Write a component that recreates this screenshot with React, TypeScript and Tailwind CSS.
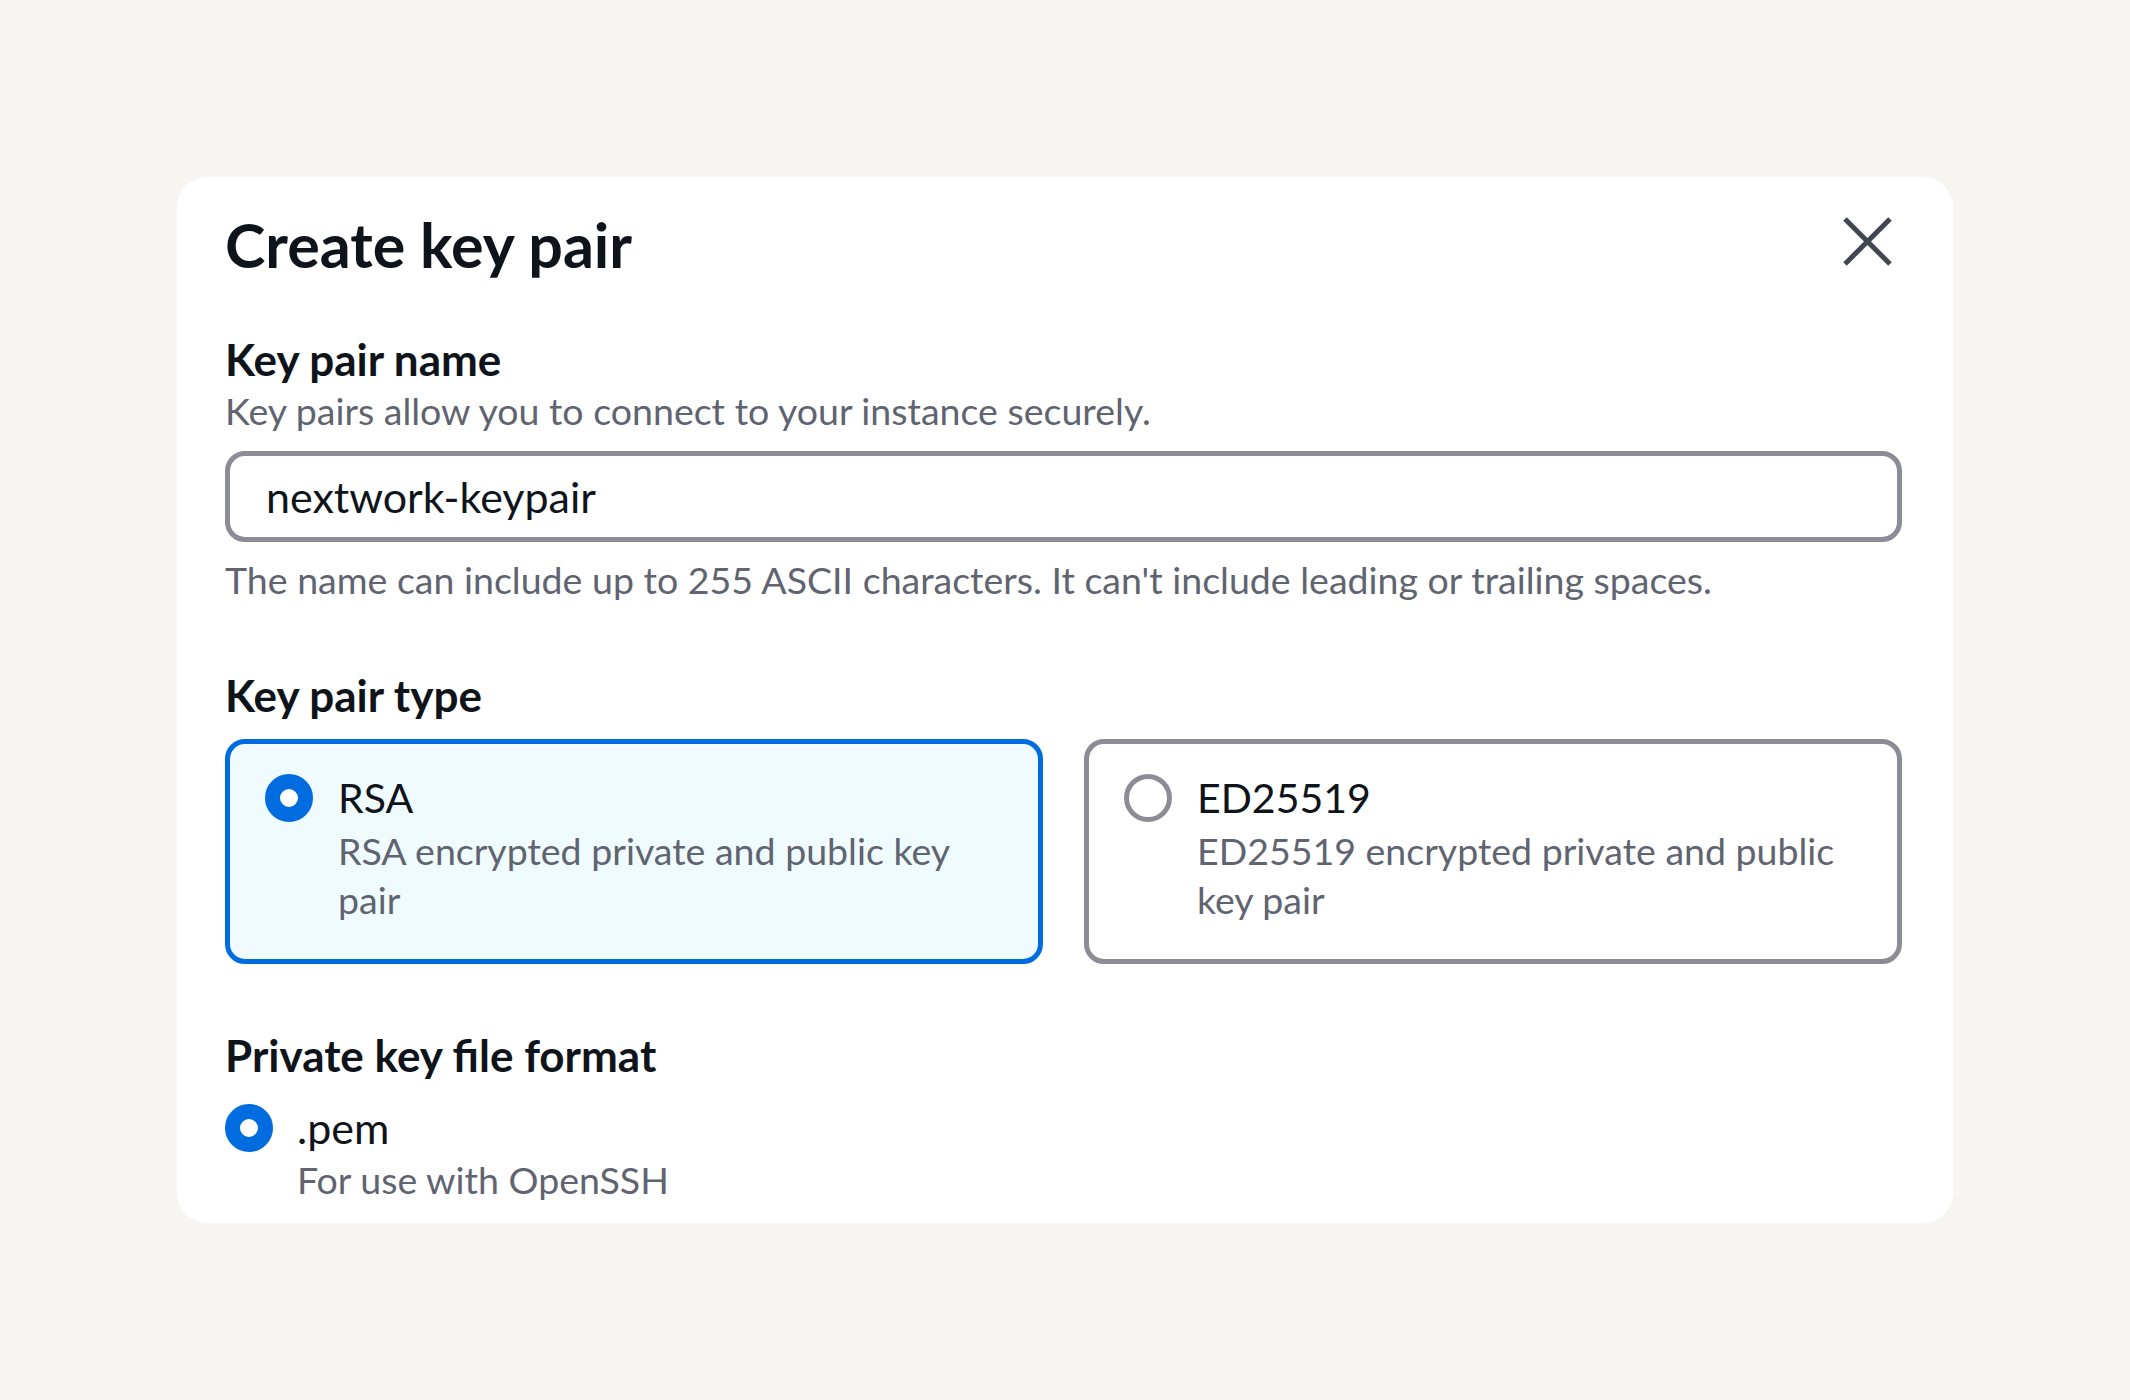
import React from "react";

const font = { fontFamily: "Lato, 'Open Sans', sans-serif" };

function Radio({ checked }: { checked: boolean }) {
  return checked ? (
    <span className="block w-[48px] h-[48px] shrink-0 rounded-full border-[15px] border-[#006ce0] bg-white" />
  ) : (
    <span className="block w-[48px] h-[48px] shrink-0 rounded-full border-[5px] border-[#8c8c94] bg-white" />
  );
}

function Tile({
  checked,
  title,
  desc,
}: {
  checked: boolean;
  title: string;
  desc: string;
}) {
  return (
    <div
      className={
        checked
          ? "flex-1 h-[225px] rounded-[20px] border-[5px] border-[#006ce0] bg-[#f0fbff] pl-[35px] pr-[40px] pt-[30px]"
          : "flex-1 h-[225px] rounded-[20px] border-[5px] border-[#8c8c94] bg-white pl-[35px] pr-[40px] pt-[30px]"
      }
    >
      <div className="flex gap-[25px]">
        <div>
          <Radio checked={checked} />
        </div>
        <div className="flex flex-col">
          <div className="text-[41px] leading-[48px] text-[#0f141a]">{title}</div>
          <div className="mt-[4px] text-[37.5px] leading-[49px] text-[#5f6470]">{desc}</div>
        </div>
      </div>
    </div>
  );
}

export default function App() {
  return (
    <div className="min-h-[1400px] w-full bg-[#f7f5f1] pt-[177px] px-[177px]" style={font}>
      <div className="bg-white rounded-[30px] pl-[48px] pr-[51px] pt-[36px] pb-[19px]">
        <div className="flex items-start justify-between">
          <h1 className="text-[61px] leading-[64px] font-bold text-[#0f141a]">Create key pair</h1>
          <button className="mt-[4px] mr-[10px] w-[49px] h-[49px] text-[#424650]" aria-label="Close">
            <svg viewBox="0 0 49 49" width="49" height="49" fill="none" stroke="currentColor" strokeWidth="5">
              <path d="M2 2 L47 47 M47 2 L2 47" />
            </svg>
          </button>
        </div>

        <div className="mt-[58px] text-[44px] leading-[49px] font-bold text-[#0f141a]">Key pair name</div>
        <div className="mt-[3px] text-[37.5px] leading-[48px] text-[#5f6470]">
          Key pairs allow you to connect to your instance securely.
        </div>
        <div className="mt-[16px] h-[91px] rounded-[20px] border-[5px] border-[#8c8c94] bg-white flex items-center pl-[36px]">
          <span className="text-[43px] leading-[48px] text-[#0f141a]">nextwork-keypair</span>
        </div>
        <div className="mt-[14px] text-[37.5px] leading-[48px] text-[#5f6470]">
          The name can include up to 255 ASCII characters. It can't include leading or trailing spaces.
        </div>

        <div className="mt-[67px] text-[44px] leading-[48px] font-bold text-[#0f141a]">Key pair type</div>
        <div className="mt-[20px] flex gap-[41px]">
          <Tile checked title="RSA" desc="RSA encrypted private and public key pair" />
          <Tile checked={false} title="ED25519" desc="ED25519 encrypted private and public key pair" />
        </div>

        <div className="mt-[67px] text-[44px] leading-[48px] font-bold text-[#0f141a]">Private key file format</div>
        <div className="mt-[25px] flex gap-[24px]">
          <div>
            <Radio checked />
          </div>
          <div className="flex flex-col">
            <div className="text-[43px] leading-[48px] text-[#0f141a]">.pem</div>
            <div className="mt-[3px] text-[37.5px] leading-[49px] text-[#5f6470]">For use with OpenSSH</div>
          </div>
        </div>
      </div>
    </div>
  );
}
